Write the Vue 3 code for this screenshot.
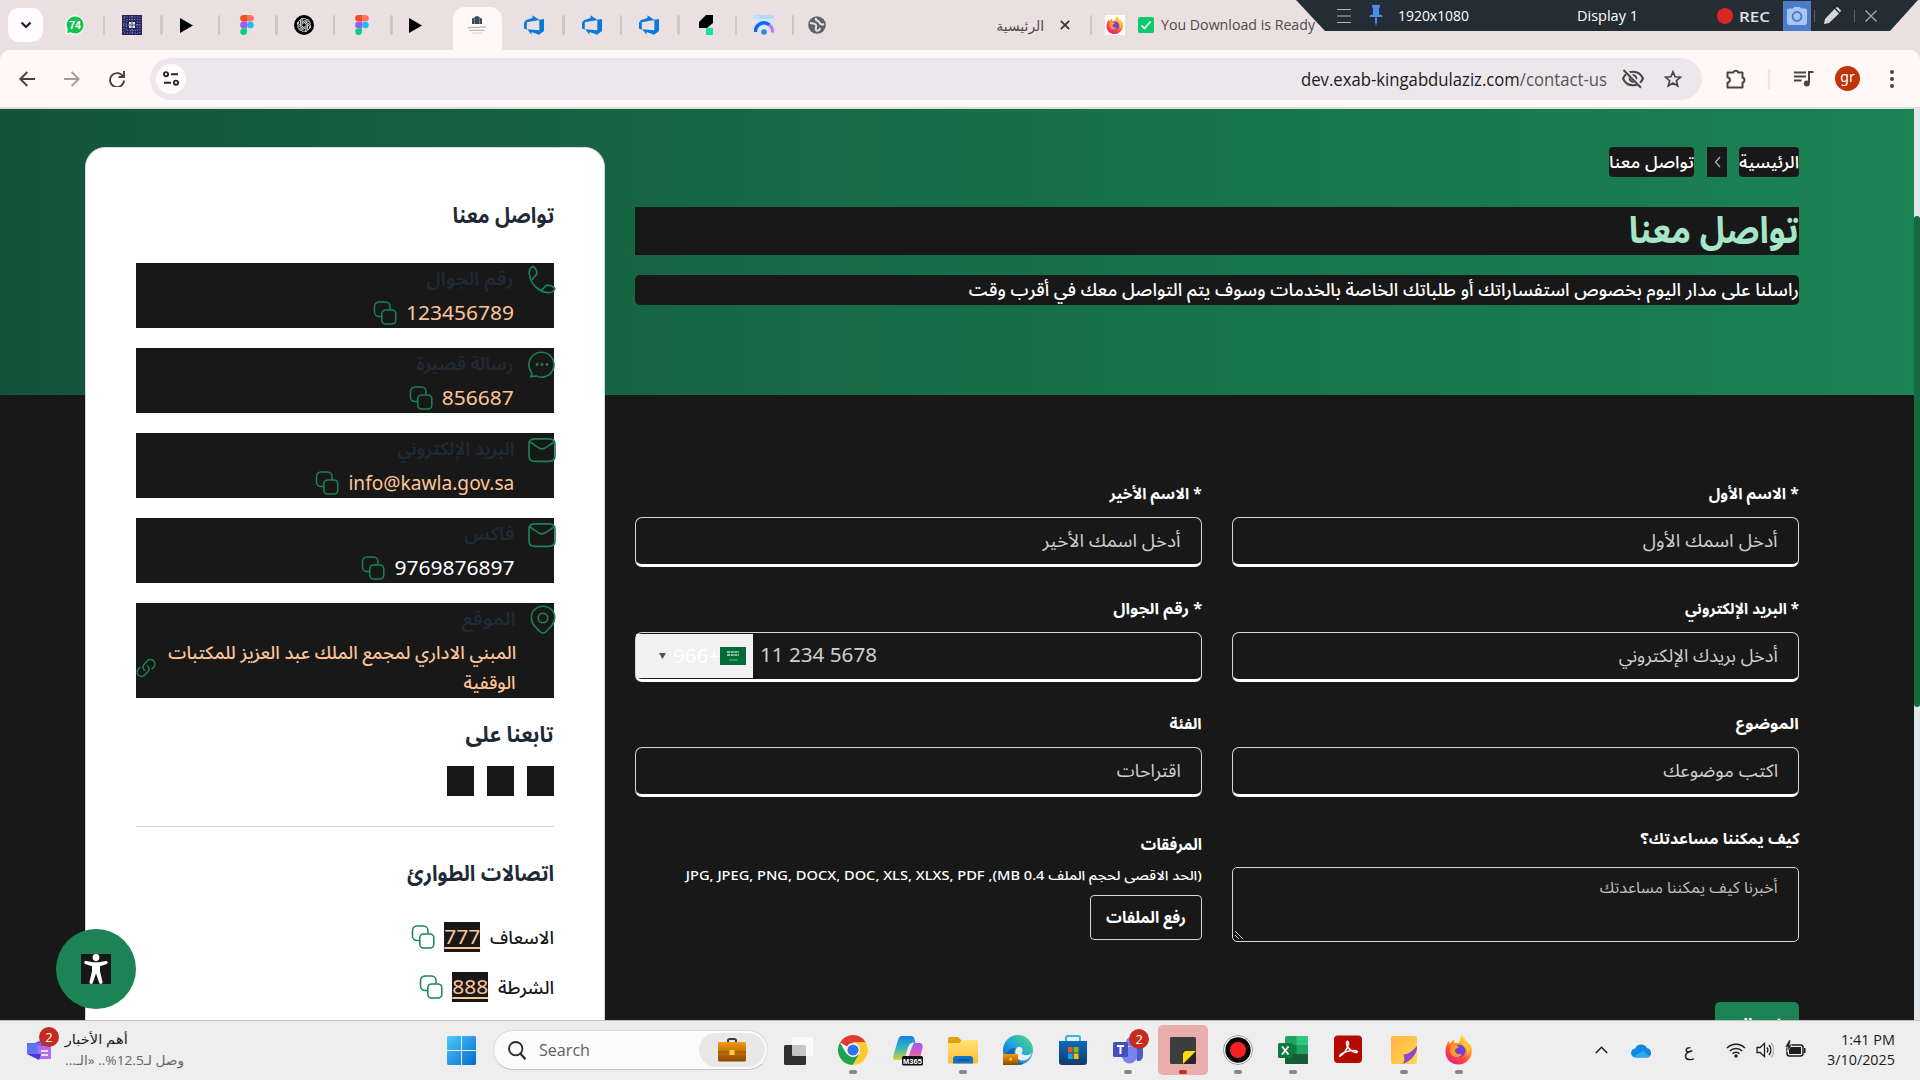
<script setup>
// Scales a text run horizontally so that it takes exactly the given width.
const vFit = {
  mounted(el, { value }) {
    const natural = el.getBoundingClientRect().width
    const rtl = getComputedStyle(el).direction === 'rtl'
    el.style.transformOrigin = rtl ? 'right center' : 'left center'
    el.style.transform = `scaleX(${value / natural})`
    el.style[rtl ? 'marginLeft' : 'marginRight'] = `${value - natural}px`
  },
}

const tabs = ['whatsapp', 'emblem', 'play', 'figma', 'openai', 'figma', 'play', 'site', 'devops', 'devops', 'devops', 'bolt', 'gauge']

const contacts = [
  { icon: 'phone', label: 'رقم الجوال', lw: 87, value: '123456789', vw: 108 },
  { icon: 'chat', label: 'رسالة قصيرة', lw: 97, value: '856687', vw: 72 },
  { icon: 'mail', label: 'البريد الإلكتروني', lw: 117, value: 'info@kawla.gov.sa', vw: 166 },
  { icon: 'mail', label: 'فاكس', lw: 50, value: '9769876897', vw: 120, plain: true },
]

const emergency = [
  { name: 'الاسعاف', w: 64, num: '777' },
  { name: 'الشرطة', w: 56, num: '888' },
]

const fields = [
  { label: '* الاسم الأول', lw: 90, ph: 'أدخل اسمك الأول', pw: 135 },
  { label: '* الاسم الأخير', lw: 92, ph: 'أدخل اسمك الأخير', pw: 138 },
  { label: '* البريد الإلكتروني', lw: 114, ph: 'أدخل بريدك الإلكتروني', pw: 159 },
  { label: '* رقم الجوال', lw: 89, phone: true },
  { label: 'الموضوع', lw: 63, ph: 'اكتب موضوعك', pw: 115 },
  { label: 'الفئة', lw: 32, ph: 'اقتراحات', pw: 64 },
]

const apps = [
  { id: 'taskview' },
  { id: 'chrome', run: true },
  { id: 'copilot' },
  { id: 'explorer', run: true },
  { id: 'edge' },
  { id: 'store' },
  { id: 'teams', run: true, badge: 2 },
  { id: 'sticky', run: true, active: true },
  { id: 'record', run: true },
  { id: 'excel', run: true },
  { id: 'acrobat' },
  { id: 'notes', run: true },
  { id: 'firefox', run: true },
]
</script>

<template>
  <div class="screen">
    <svg class="sprite" width="0" height="0" aria-hidden="true">
      <defs>
        <linearGradient id="ffBody" x1="0.8" y1="0" x2="0.2" y2="1">
          <stop offset="0" stop-color="#fff44f" /><stop offset=".35" stop-color="#ffa52a" />
          <stop offset=".65" stop-color="#ff4b3c" /><stop offset="1" stop-color="#e31587" />
        </linearGradient>
        <linearGradient id="winBlue" x1="0" y1="0" x2="1" y2="1">
          <stop offset="0" stop-color="#4ccaff" /><stop offset="1" stop-color="#0669cb" />
        </linearGradient>
        <linearGradient id="brown" x1="0" y1="0" x2="0" y2="1">
          <stop offset="0" stop-color="#f39a12" /><stop offset=".6" stop-color="#b96a05" /><stop offset="1" stop-color="#8a4704" />
        </linearGradient>
        <linearGradient id="cpA" x1="0" y1="0" x2="0" y2="1">
          <stop offset="0" stop-color="#1b7fe0" /><stop offset=".5" stop-color="#2fb8c0" /><stop offset="1" stop-color="#e8c92e" />
        </linearGradient>
        <linearGradient id="cpB" x1="0" y1="0" x2="0" y2="1">
          <stop offset="0" stop-color="#9a5cf0" /><stop offset=".5" stop-color="#d85bc0" /><stop offset="1" stop-color="#ff8f5e" />
        </linearGradient>
        <linearGradient id="edgeG" x1="0" y1="1" x2="1" y2="0">
          <stop offset="0" stop-color="#0c59a4" /><stop offset=".5" stop-color="#1fa5e0" /><stop offset="1" stop-color="#5fe06a" />
        </linearGradient>
        <linearGradient id="folder" x1="0" y1="0" x2="0" y2="1">
          <stop offset="0" stop-color="#ffe07a" /><stop offset="1" stop-color="#fbc02d" />
        </linearGradient>
        <linearGradient id="storeG" x1="0" y1="0" x2="0" y2="1">
          <stop offset="0" stop-color="#0a6ac0" /><stop offset="1" stop-color="#123a68" />
        </linearGradient>
        <linearGradient id="noteG" x1="0" y1="0" x2="1" y2="1">
          <stop offset="0" stop-color="#ffb347" /><stop offset="1" stop-color="#ffd94a" />
        </linearGradient>
        <symbol id="firefox" viewBox="0 0 32 32">
          <path fill="url(#ffBody)" d="M19 1c2 2 3 4 3.500 6 3 1 4.500 3 5.500 5 3 8-2 18-12 18.500C7 30.500 2 24 2.500 17 2.600 13 4 9 6 7l1 3c1-2 2.500-3.500 4-4.500l.5 3.500h4C17 7 17 3 19 1z" />
          <circle cx="16" cy="17" r="6.500" fill="#7540d9" />
          <path fill="#ff9a2b" d="M8 11c3-1 6 0 8 2-1 1-3 1.500-4 3 0 4 4 5 7 4-2 5-11 4-12-3z" />
          <path fill="#ffc93a" d="M22 8c4 3 5 9 2 14 1-5 0-9-4-11z" />
        </symbol>
      </defs>
    </svg>

    <!-- Browser tab strip -->
    <header class="tabstrip">
      <button class="tab-search">
        <svg width="12" height="8" viewBox="0 0 12 8"><path d="M1.500 1.500 6 6l4.500-4.500" fill="none" stroke="#1f1a1b" stroke-width="2.200" /></svg>
      </button>
      <div class="tabs">
        <div v-for="(t, i) in tabs" :key="i" class="tab" :class="{ active: t === 'site', nosep: i === 6 }">
          <svg v-if="t === 'whatsapp'" width="20" height="20" viewBox="0 0 20 20">
            <path d="M10 .3a9.700 9.700 0 1 1-4.600 18.300L.4 19.600l1.200-4.700A9.700 9.700 0 0 1 10 .3z" fill="#fff" />
            <path d="M10 1.500a8.500 8.500 0 1 1-4.300 15.800l-3.700.8.900-3.600A8.500 8.500 0 0 1 10 1.500z" fill="#17c24c" />
            <text x="10" y="13.800" text-anchor="middle" font-size="10.500" font-weight="700" fill="#fff" font-family="Liberation Sans">74</text>
          </svg>
          <svg v-else-if="t === 'emblem'" width="20" height="20" viewBox="0 0 20 20">
            <rect width="20" height="20" fill="#25245c" />
            <g fill="none" stroke="#a3a2cf" stroke-width="1" stroke-dasharray="1 1.600">
              <rect x="2" y="2" width="16" height="16" /><rect x="4.500" y="4.500" width="11" height="11" /><path d="M10 1v18M1 10h18" />
            </g>
            <path d="M7 7h2.500v2.500H7zM10.500 7H13v2.500h-2.500zM7 10.500h2.500V13H7zM10.500 10.500H13V13h-2.500z" fill="#e6e6f7" />
          </svg>
          <svg v-else-if="t === 'play'" class="play" width="14" height="15" viewBox="0 0 14 15"><path d="M0 0 13 7.500 0 15z" fill="#000" /></svg>
          <svg v-else-if="t === 'figma'" width="14" height="20" viewBox="0 0 14 20">
            <path d="M3.500 0H7v6.600H3.500a3.300 3.300 0 0 1 0-6.600z" fill="#f24e1e" />
            <path d="M7 0h3.500a3.300 3.300 0 0 1 0 6.600H7z" fill="#ff7262" />
            <path d="M3.500 6.600H7v6.700H3.500a3.300 3.300 0 0 1 0-6.700z" fill="#a259ff" />
            <circle cx="10.400" cy="10" r="3.300" fill="#1abcfe" />
            <path d="M3.500 13.300H7v3.300a3.400 3.400 0 1 1-3.500-3.300z" fill="#0acf83" />
          </svg>
          <svg v-else-if="t === 'openai'" width="20" height="20" viewBox="0 0 20 20">
            <circle cx="10" cy="10" r="10" fill="#000" />
            <g fill="none" stroke="#fff" stroke-width=".8">
              <path v-for="a in 6" :key="a" d="M8 10.500V6a2.500 2.500 0 0 1 4.600-1.300M8.100 7.200 12 5a2.600 2.600 0 0 1 3.600 1" :transform="`rotate(${a * 60} 10 10)`" />
            </g>
          </svg>
          <svg v-else-if="t === 'site'" width="20" height="20" viewBox="0 0 20 20">
            <path d="M5 9V3.500L7 3v6zM7.300 9V2L10 1l2.700 1v7zM13 9V3l2 .5V9z" fill="#2f4c5c" />
            <path d="M1 13c1-2 2 1 3-.5s2 1 3 0 2 .8 3 0 2 .8 3-.3 2 .8 3 0 2-.5 3 .5M2 15.300h16" stroke="#b5aca6" stroke-width="1.100" fill="none" />
            <path d="M5 18h10" stroke="#d0c9c5" stroke-width=".8" />
          </svg>
          <svg v-else-if="t === 'devops'" width="20" height="20" viewBox="0 0 20 20">
            <path d="M20 4v12l-5 3.800-7.500-2.900v2.900l-4.200-5.500 12 1V4.800zM15.500 4.900 8.500.3v2.800L2.200 5 0 7.500v6l2.800 1.200V7.300z" fill="#0a7ad8" />
          </svg>
          <svg v-else-if="t === 'bolt'" width="16" height="20" viewBox="0 0 16 20">
            <path d="M8 0h7v8l-6 5H1V7z" fill="#000" /><rect x="8" y="13" width="7" height="7" fill="#16e0a4" />
          </svg>
          <svg v-else width="20" height="20" viewBox="0 0 20 20">
            <rect width="20" height="13" rx="1" fill="#b5d9fa" /><rect y="4" width="20" height="10" fill="#d3e8fb" /><circle cx="2" cy="2" r=".7" fill="#fff" /><circle cx="4.500" cy="2" r=".7" fill="#fff" />
            <path d="M1.500 17a8.500 8.500 0 0 1 14-7" fill="none" stroke="#1565f5" stroke-width="3.400" />
            <path d="M15.500 10a8.500 8.500 0 0 1 3 7.500" fill="none" stroke="#c678f2" stroke-width="3.400" />
            <circle cx="10" cy="17" r="2.800" fill="#1c8ef0" />
          </svg>
        </div>
        <div class="tab wide">
          <svg class="globe" width="18" height="18" viewBox="0 0 18 18">
            <circle cx="9" cy="9" r="8.800" fill="#5f6368" />
            <path d="M2 7c3 1 5 0 6 2s-1 3 0 5 4 0 4-2M8 2c-1 3 2 2 3 4s3 3 5 2" fill="none" stroke="#eae0e1" stroke-width="2" />
          </svg>
          <div class="push" dir="rtl"><span class="tabtitle" v-fit="48">الرئيسية</span></div>
          <svg class="close" width="10" height="10" viewBox="0 0 10 10"><path d="m.8.8 8.400 8.400M9.200.8.800 9.200" stroke="#3f3536" stroke-width="1.800" /></svg>
        </div>
        <div class="tab last">
          <span class="ffbox"><svg width="20" height="20"><use href="#firefox" /></svg></span>
          <svg class="ok" width="16" height="16" viewBox="0 0 16 16"><rect width="16" height="16" rx="2" fill="#0ccb6a" /><path d="m3.500 8.500 3 3 6-7" fill="none" stroke="#fff" stroke-width="1.600" /></svg>
          <span class="tabtitle" v-fit="154">You Download is Ready</span>
        </div>
      </div>
      <div class="recorder">
        <svg class="burger" width="14" height="16" viewBox="0 0 14 16"><path d="M0 1.500h14M0 8h14M0 14.500h14" stroke="#b6babd" stroke-width="1.200" /></svg>
        <svg class="pin" width="14" height="21" viewBox="0 0 14 21"><path d="M3 0h8v2l-1 1v6l3.500 1.500V12H.5v-1.500L4 9V3L3 2zM6 12.500h2V17l-1 4-1-4z" fill="#4e8bea" /></svg>
        <span class="rtext res" v-fit="71">1920x1080</span>
        <span class="rtext disp" v-fit="61">Display 1</span>
        <i class="dot"></i>
        <span class="rtext rec" v-fit="31">REC</span>
        <span class="cam">
          <svg width="20" height="18" viewBox="0 0 20 18"><path d="M6 1.500 7 0h6l1 1.500h4a2 2 0 0 1 2 2V16a2 2 0 0 1-2 2H2a2 2 0 0 1-2-2V3.500a2 2 0 0 1 2-2z" fill="#a9c6f3" /><circle cx="10" cy="9.500" r="4.400" fill="none" stroke="#4b7cc8" stroke-width="2" /></svg>
        </span>
        <i class="vsep"></i>
        <svg class="pencil" width="17" height="17" viewBox="0 0 17 17"><path d="m11.500 1 2-1 3.500 3.500-1 2zM10.500 2l4.500 4.500L5 16l-5 1 1-5z" fill="#d4d7d9" /></svg>
        <i class="vsep"></i>
        <svg class="rx" width="12" height="12" viewBox="0 0 12 12"><path d="m.5.5 11 11M11.500.5l-11 11" stroke="#a6abb0" stroke-width="1.300" /></svg>
      </div>
    </header>

    <!-- Browser toolbar -->
    <div class="toolbar">
      <svg class="back" width="16" height="16" viewBox="0 0 16 16"><path d="M16 8H1.500M8.300 1 1.300 8l7 7" fill="none" stroke="#4a3f3f" stroke-width="1.900" /></svg>
      <svg class="fwd" width="16" height="16" viewBox="0 0 16 16"><path d="M0 8h14.500M7.700 1l7 7-7 7" fill="none" stroke="#a79d9c" stroke-width="1.900" /></svg>
      <svg class="reload" width="16" height="16" viewBox="0 0 16 16"><path d="M14 5.500A7 7 0 1 0 15 9.500M15 0v6H9.500" fill="none" stroke="#4a3f3f" stroke-width="1.900" /></svg>
      <div class="omnibox">
        <span class="tune"><svg width="16" height="15" viewBox="0 0 16 15"><g fill="none" stroke="#2b2324" stroke-width="1.900"><circle cx="3" cy="3.200" r="2.100" /><path d="M8 3.200h7M1 11.700h7" /><circle cx="13" cy="11.700" r="2.100" /></g></svg></span>
        <span class="url" v-fit="306">dev.exab-kingabdulaziz.com<em>/contact-us</em></span>
        <svg class="eye" width="24" height="20" viewBox="0 0 24 20"><g fill="none" stroke="#4b4343" stroke-width="2"><path d="M2 9.500C4 5 8 2.700 12 2.700S20 5 22 9.500c-2 4.500-6 6.800-10 6.800S4 14 2 9.500z" /><circle cx="12" cy="9.500" r="3.300" /><path d="M3.500.8 21 18.600" stroke="#ece7ea" stroke-width="4" /><path d="M2.500 1 20 18.800" /></g></svg>
        <svg class="star" width="18" height="18" viewBox="0 0 18 18"><path d="m9 1.800 2.100 5 5.400.4-4.100 3.500 1.300 5.300L9 13.100 4.300 16l1.300-5.300L1.500 7.200l5.400-.4z" fill="none" stroke="#4b4343" stroke-width="1.700" /></svg>
      </div>
      <svg class="ext" width="22" height="22" viewBox="0 0 22 22"><path d="M2.500 4.500h6a2.300 1.800 0 1 1 4.600 0h4.400v5.200a1.900 2.400 0 0 1 0 4.800v5h-15v-4.800c3.200-.5 3.200-4.800 0-5.400z" fill="none" stroke="#4b4343" stroke-width="2" stroke-linejoin="round" /></svg>
      <i class="tsep"></i>
      <svg class="music" width="20" height="16" viewBox="0 0 20 16"><path d="M0 1.500h12M0 5.500h12M0 9.500h7.500" stroke="#4b4343" stroke-width="2" /><path d="M15 12V1h4.500" stroke="#4b4343" stroke-width="2" fill="none" /><circle cx="12.800" cy="12.500" r="3" fill="#4b4343" /></svg>
      <span class="avatar">gr</span>
      <svg class="dots" width="4" height="18" viewBox="0 0 4 18"><g fill="#4b4343"><circle cx="2" cy="2" r="2" /><circle cx="2" cy="9" r="2" /><circle cx="2" cy="16" r="2" /></g></svg>
    </div>

    <!-- Website -->
    <div class="browser-view">
      <div class="page" dir="rtl">
        <main class="main">
          <nav class="crumbs">
            <span class="crumb"><span v-fit="60">الرئيسية</span></span>
            <span class="crumb sep"><svg width="7" height="12" viewBox="0 0 7 12"><path d="M6 1 1.500 6 6 11" fill="none" stroke="#a9adb3" stroke-width="1.300" /></svg></span>
            <span class="crumb"><span v-fit="85">تواصل معنا</span></span>
          </nav>
          <h1><span v-fit="170">تواصل معنا</span></h1>
          <p class="lead"><span v-fit="830">راسلنا على مدار اليوم بخصوص استفساراتك أو طلباتك الخاصة بالخدمات وسوف يتم التواصل معك في أقرب وقت</span></p>

          <form class="form">
            <div v-for="f in fields" :key="f.label" class="field">
              <label><span v-fit="f.lw">{{ f.label }}</span></label>
              <div v-if="f.phone" class="input phone" dir="ltr">
                <div class="dial">
                  <svg width="7" height="6" viewBox="0 0 7 6"><path d="M0 0h7L3.500 6z" fill="#555" /></svg>
                  <span class="code" v-fit="47">966+</span>
                  <svg class="flag" width="26" height="18" viewBox="0 0 26 18"><rect width="26" height="18" fill="#036b37" /><path d="M7 5h12M7 8h12" stroke="#8fc0a6" stroke-width="2" stroke-dasharray="3 .7" /><path d="M9 13h9" stroke="#6fae8d" stroke-width="1" /></svg>
                </div>
                <span class="ph" v-fit="117">11 234 5678</span>
              </div>
              <div v-else class="input"><span class="ph" v-fit="f.pw">{{ f.ph }}</span></div>
            </div>
            <div class="field">
              <label><span v-fit="159">كيف يمكننا مساعدتك؟</span></label>
              <div class="area">
                <span class="ph small" v-fit="178">أخبرنا كيف يمكننا مساعدتك</span>
                <svg class="grip" width="8" height="8" viewBox="0 0 8 8"><path d="M0 0l8 8M0 4l4 4" stroke="#c9c9c9" stroke-width="1" /></svg>
              </div>
            </div>
            <div class="field files">
              <label><span v-fit="61">المرفقات</span></label>
              <div class="hint"><span v-fit="516">(الحد الاقصى لحجم الملف 0.4 MB), JPG, JPEG, PNG, DOCX, DOC, XLS, XLXS, PDF</span></div>
              <div class="upload"><span v-fit="80">رفع الملفات</span></div>
            </div>
          </form>
          <div class="submit"><span v-fit="46">إرسال</span></div>
        </main>

        <aside class="card">
          <h2><span v-fit="102">تواصل معنا</span></h2>
          <div class="list">
            <div v-for="c in contacts" :key="c.label" class="contact">
              <svg v-if="c.icon === 'phone'" class="ci" width="28" height="30" viewBox="0 0 28 30"><path d="M5 1.500C2 2.500 1 6 1.300 9c1 9.500 9 18 18.700 18.600 3 .2 6-1.200 6.800-4-2-3-5-3.300-7.500-3.500-2.500.4-3.300 3.600-5.300 4.500M5 1.500c3 2 4 4.500 4 7-1 2.500-3.500 3-4.300 5.800" fill="none" stroke="currentColor" stroke-width="1.600" stroke-linecap="round" stroke-linejoin="round" /></svg>
              <svg v-else-if="c.icon === 'chat'" class="ci" width="28" height="30" viewBox="0 0 28 30"><path d="M14 2.200A12.500 12.500 0 1 1 8 25.900c-1.500.5-3 1.200-5.500.8 1.300-1 1.800-3 .6-5A12.500 12.500 0 0 1 14 2.200z" fill="none" stroke="currentColor" stroke-width="1.600" stroke-linejoin="round" /><g fill="currentColor"><circle cx="9" cy="14.500" r="1.400" /><circle cx="14" cy="14.500" r="1.400" /><circle cx="19" cy="14.500" r="1.400" /></g></svg>
              <svg v-else class="ci" width="28" height="30" viewBox="0 0 28 30"><path d="M7 3.800h14c4 0 6 1.500 6 5.500v11.500c0 4-2 5.500-6 5.500H7c-4 0-6-1.500-6-5.500V9.300C1 5.300 3 3.800 7 3.800zM2 7.300c4 1.500 8 6.500 12 6.500s8-5 12-6.500" fill="none" stroke="currentColor" stroke-width="1.700" /></svg>
              <div class="info">
                <div class="cl"><span v-fit="c.lw">{{ c.label }}</span></div>
                <div class="cv" :class="{ plain: c.plain }">
                  <span v-fit="c.vw">{{ c.value }}</span>
                  <svg class="copy" width="24" height="24" viewBox="0 0 24 24"><path d="M9 15.500H6A4.500 4.500 0 0 1 1.500 11V5.500A4.500 4.500 0 0 1 6 1h6.500A4.500 4.500 0 0 1 17 5.500V8.500" /><rect x="8.800" y="9" width="14" height="14" rx="3.800" /></svg>
                </div>
              </div>
            </div>
            <div class="contact place">
              <svg class="ci" width="26" height="30" viewBox="0 0 26 30"><path d="M13 1.200c6.800 0 11.700 5 11.700 11.300 0 6.500-5 10.500-9.200 14.500-1.800 1.600-3.200 1.600-5 0C6.300 23 1.300 19 1.300 12.500 1.300 6.200 6.200 1.200 13 1.200z" fill="none" stroke="currentColor" stroke-width="1.600" /><circle cx="13" cy="13" r="4.800" fill="none" stroke="currentColor" stroke-width="1.600" /></svg>
              <div class="info">
                <div class="cl"><span v-fit="54">الموقع</span></div>
                <div class="addr"><span v-fit="348">المبني الاداري لمجمع الملك عبد العزيز للمكتبات</span><br /><span v-fit="52">الوقفية</span></div>
              </div>
              <svg class="link" width="20" height="20" viewBox="0 0 20 20"><g fill="none" stroke="currentColor" stroke-width="1.500" stroke-linecap="round"><path d="M8.500 12.200c-2.300-2-1.800-4.300-.3-6l2.800-3c1.800-2 4.800-2.200 6.600-.4s1.600 4.500 0 6.300l-1.500 1.600" /><path d="M11.500 7.800c2.300 2 1.800 4.300.3 6l-2.800 3c-1.800 2-4.800 2.200-6.600.4s-1.600-4.500 0-6.300l1.500-1.600" /></g></svg>
            </div>
          </div>
          <h2 class="follow"><span v-fit="88">تابعنا على</span></h2>
          <div class="social"><i></i><i></i><i></i></div>
          <hr />
          <h2 class="emerg"><span v-fit="147">اتصالات الطوارئ</span></h2>
          <div v-for="e in emergency" :key="e.num" class="erow">
            <span class="en"><span v-fit="e.w">{{ e.name }}</span></span>
            <span class="num"><span v-fit="36">{{ e.num }}</span></span>
            <svg class="copy" width="24" height="24" viewBox="0 0 24 24"><path d="M9 15.500H6A4.500 4.500 0 0 1 1.500 11V5.500A4.500 4.500 0 0 1 6 1h6.500A4.500 4.500 0 0 1 17 5.500V8.500" /><rect x="8.800" y="9" width="14" height="14" rx="3.800" /></svg>
          </div>
        </aside>
      </div>
      <div class="scroll"><i></i></div>
      <div class="a11y">
        <span><svg width="26" height="30" viewBox="0 0 26 30"><circle cx="13" cy="3.500" r="3.400" fill="#fff" /><path d="M1.500 7.500C1 8.500 1.300 9.700 2.300 10.100L9 12.300v5L6.500 28c-.3 2 2.500 2.800 3.300.8L13 19.500l3.200 9.300c.8 2 3.600 1.200 3.300-.8L17 17.300v-5l6.700-2.200c1.800-.8 1-3.500-1-3.100L16 8.300h-6L3.300 7c-.8-.1-1.500 0-1.800.5z" fill="#fff" /></svg></span>
      </div>
    </div>

    <!-- Taskbar -->
    <footer class="taskbar">
      <div class="widget">
        <svg width="28" height="28" viewBox="0 0 28 28"><path d="m2 12 12-6 12 6-10 12z" fill="#7b3ff0" /><path d="M2 8h14v13l-14-2z" fill="#5b74f0" /><path d="M12 11h14v13H14z" fill="#b06cf5" /><path d="M2 19l12 6 2-6z" fill="#4a35d8" /><path d="M16 16h7M16 20h7" stroke="#fff" stroke-width="1.500" /></svg>
        <b class="badge">2</b>
      </div>
      <div class="news" dir="rtl">
        <div class="n1"><span v-fit="63">أهم الأخبار</span></div>
        <div class="n2"><span v-fit="119">وصل لـ12.5%.. «الـ...</span></div>
      </div>
      <svg class="win" width="29" height="29" viewBox="0 0 29 29"><path fill="url(#winBlue)" d="M1 0h13v14H0V1zM15 0h13l1 1v13H15zM0 15h14v14H1l-1-1zM15 15h14v13l-1 1H15z" /></svg>
      <div class="search">
        <svg width="18" height="19" viewBox="0 0 18 19"><circle cx="7.700" cy="7.700" r="6.700" fill="none" stroke="#2c2c2c" stroke-width="1.800" /><path d="m12.500 12.700 5 5.500" stroke="#2c2c2c" stroke-width="2.200" /></svg>
        <span class="stext" v-fit="51">Search</span>
        <span class="case"><svg width="30" height="24" viewBox="0 0 30 24"><path d="M11 5V2.500C11 1.500 12 1 13 1h4c1 0 2 .5 2 1.500V5" fill="none" stroke="#3c3c3c" stroke-width="2" /><rect x="1" y="4" width="28" height="19.500" rx="1.500" fill="url(#brown)" /><path d="M1 14h28" stroke="#8f4f02" /><rect x="12.500" y="12" width="5" height="5" fill="#ffd83a" /></svg></span>
      </div>
      <div class="apps">
        <div v-for="a in apps" :key="a.id" class="app" :class="{ on: a.active }">
          <svg width="32" height="32" viewBox="0 0 32 32">
            <template v-if="a.id === 'taskview'"><rect x="2" y="11" width="22" height="20" rx="1.500" fill="#303030" /><rect x="10" y="3" width="21" height="19" rx="1" fill="#fff" opacity=".72" /></template>
            <template v-else-if="a.id === 'chrome'">
              <circle cx="16" cy="16" r="15" fill="#fff" />
              <path d="M16 16 3 8.500A15 15 0 0 1 29 8.500H16z" fill="#e23b2f" /><path d="M3 8.500A15 15 0 0 0 16 31l6.500-11.200L9.500 19.800z" fill="#20a050" /><path d="M29 8.500A15 15 0 0 1 16 31l6.500-11.200L16 8.500z" fill="#fccc2e" />
              <circle cx="16" cy="16" r="7" fill="#fff" /><circle cx="16" cy="16" r="5.600" fill="#2f73e8" />
            </template>
            <template v-else-if="a.id === 'copilot'">
              <path d="M10 2h9c2 0 3 1 3.500 3l1 4c-5-1-7 2-8 6l-2 7c-1 3-3 4-5 4H4c-3 0-3-2-2.500-5L6 6c.7-2.500 2-4 4-4z" fill="url(#cpA)" /><path d="M22 9h5c3 0 4 2 3.500 5L28 24c-1 3-3 4-5 4h-9c3-2 4-13 8-19z" fill="url(#cpB)" />
              <rect x="10" y="22" width="21" height="9.500" rx="1.500" fill="#111" /><text x="20.500" y="29.600" font-size="7.500" font-weight="700" fill="#fff" text-anchor="middle" font-family="Liberation Sans">M365</text>
            </template>
            <template v-else-if="a.id === 'explorer'"><path d="M1 5a2 2 0 0 1 2-2h8l3 3v6H1z" fill="#e0a100" /><path d="M1 9h11l3-3h15a1 1 0 0 1 1 1v21a1.500 1.500 0 0 1-1.500 1.500h-27A1.500 1.500 0 0 1 1 28z" fill="url(#folder)" /><path d="M6 29.500V25a3 3 0 0 1 3-3h14a3 3 0 0 1 3 3v4.500z" fill="#1173c6" /><path d="M10 26h12" stroke="#0a4f91" stroke-width="1.300" /></template>
            <template v-else-if="a.id === 'edge'">
              <circle cx="16" cy="16" r="15" fill="url(#edgeG)" /><path d="M14 15c1.500-3.500 7-2.500 6.500 1.500-.3 2-1.500 2.500 0 3.700 3 2 7 1 9.500-1.200-1.500 4.500-5.500 8-10.500 7.500-5-.7-7.500-6-5.500-11.500z" fill="#eee" /><path d="M13 14c-3 6 0 15 9 15.500-2 1-4.500 1.500-7 1.500-6 0-11-4-11-9 0-4 4-8 9-8z" fill="#1260b4" />
              <rect x="1" y="20" width="15" height="11" fill="url(#brown)" /><rect x="7.500" y="24" width="2.500" height="2.500" fill="#ffd83a" />
            </template>
            <template v-else-if="a.id === 'store'"><path d="M9 8V4a2 2 0 0 1 2-2h10a2 2 0 0 1 2 2v4" fill="none" stroke="#30b5f5" stroke-width="2" /><path d="M2 7h28v21a3 3 0 0 1-3 3H5a3 3 0 0 1-3-3z" fill="url(#storeG)" /><path d="M11 13h4.700v5.500H11z" fill="#f35325" /><path d="M16.700 13h4.800v5.500h-4.800z" fill="#81bc06" /><path d="M11 19.500h4.700V25H11z" fill="#05a6f0" /><path d="M16.700 19.500h4.800V25h-4.800z" fill="#ffba08" /></template>
            <template v-else-if="a.id === 'teams'"><circle cx="19" cy="8" r="5" fill="#7b83eb" /><circle cx="27" cy="10" r="3.300" fill="#5059c9" /><path d="M22 13h9v9a5 5 0 0 1-6 5z" fill="#5059c9" /><path d="M10 13h15v9a7.500 7.500 0 0 1-15 0z" fill="#7b83eb" /><rect x="1" y="8" width="15" height="15" rx="1.500" fill="#4550bd" /><path d="M5 12h7M8.500 12v8" stroke="#fff" stroke-width="2" /></template>
            <template v-else-if="a.id === 'sticky'"><path d="M3 4.500A1.500 1.500 0 0 1 4.500 3h23A1.500 1.500 0 0 1 29 4.500V17L16 30H4.500A1.500 1.500 0 0 1 3 28.500z" fill="#3d3d3d" /><path d="M16 17v13h12a1 1 0 0 0 1-1V17z" fill="#262626" /><path d="M16 30V20.500A3.500 3.500 0 0 1 19.500 17H29z" fill="#fddc0b" /></template>
            <template v-else-if="a.id === 'record'"><circle cx="16" cy="16" r="14.500" fill="#fff" stroke="#777" stroke-width=".7" /><circle cx="16" cy="16" r="12.700" fill="#050505" /><circle cx="16" cy="16" r="8" fill="#f9211f" /></template>
            <template v-else-if="a.id === 'excel'"><rect x="8" y="2" width="23" height="28" rx="1.500" fill="#21a366" /><path d="M19.500 2H30a1 1 0 0 1 1 1v8H19.500z" fill="#33c481" /><path d="M8 11h11.500v9H8z" fill="#107c41" /><path d="M8 20h23v9a1 1 0 0 1-1 1H9a1 1 0 0 1-1-1z" fill="#185c37" /><rect x="1" y="9" width="14.500" height="15" rx="1.500" fill="#0f7a40" /><path d="m5 12.500 6.500 8M11.500 12.500l-6.500 8" stroke="#fff" stroke-width="1.900" /></template>
            <template v-else-if="a.id === 'acrobat'"><rect x="2" y="1.500" width="28" height="27.500" rx="4" fill="#b30b00" /><path d="M8 22c3-1 7-6 8.500-12 .5-3-2-3.500-2-1 0 5 6 9 9 9.500 2.500.3 2.500-2-1-2-5 0-10 1.500-13 3.500-2 1.500-2 3-1.500 2z" fill="none" stroke="#fff" stroke-width="1.600" /></template>
            <template v-else-if="a.id === 'notes'"><path d="M3 4a2 2 0 0 1 2-2h22a2 2 0 0 1 2 2v24a2 2 0 0 1-2 2H5a2 2 0 0 1-2-2z" fill="url(#noteG)" /><path d="M29 12v3C27 22 23 27 14.500 30c2-2 2.500-5 1-9.500 5-.5 9-3.500 13.500-8.500z" fill="#8b4bc9" /><path d="M15.500 20.500C17 25 16 28 13 30l3.500-4z" fill="#a96be0" /></template>
            <use v-else href="#firefox" />
          </svg>
          <b v-if="a.badge" class="badge">{{ a.badge }}</b>
          <i v-if="a.run" class="run"></i>
        </div>
      </div>
      <div class="tray">
        <svg class="chev" width="13" height="8" viewBox="0 0 13 8"><path d="m.8 7 5.700-5.700L12.200 7" fill="none" stroke="#222" stroke-width="1.600" /></svg>
        <svg class="cloud" width="21" height="15" viewBox="0 0 21 15"><path d="M5 14.500a4.500 4.500 0 0 1-.8-9A6.500 6.500 0 0 1 16 5a5 5 0 0 1 1 9.500z" fill="#1287e0" /><path d="M3 13.500 12 8l7 5.500a4 4 0 0 1-2.500 1H5.500z" fill="#2ca7f0" /></svg>
        <span class="lang" dir="rtl">ع</span>
        <svg class="wifi" width="20" height="16" viewBox="0 0 20 16"><g fill="none" stroke="#1d1d1d" stroke-width="1.500"><path d="M1 6a12.700 12.700 0 0 1 18 0M3.800 9a8.800 8.800 0 0 1 12.400 0M6.500 11.800a5 5 0 0 1 7 0" /></g><circle cx="10" cy="14" r="1.700" fill="#1d1d1d" /></svg>
        <svg class="vol" width="18" height="16" viewBox="0 0 18 16"><g fill="none" stroke="#1d1d1d" stroke-width="1.300"><path d="M1 5.500h3L8.500 1.500v13L4 10.500H1z" /><path d="M11 5.500a4 4 0 0 1 0 5M13 3a7.500 7.500 0 0 1 0 10" /><path d="M15.200 1a10.500 10.500 0 0 1 0 14" stroke="#aaa" /></g></svg>
        <svg class="bat" width="21" height="17" viewBox="0 0 21 17"><rect x="2" y="5" width="16" height="11" rx="2.500" fill="none" stroke="#1d1d1d" stroke-width="1.500" /><rect x="4" y="7" width="12" height="7" fill="#1d1d1d" /><path d="M19 8h1.500v5H19z" fill="#1d1d1d" /><path d="M4 0 0 7h3l-1 5 5-7H4.500L6 0z" fill="#1d1d1d" stroke="#eee" stroke-width=".6" /></svg>
        <div class="clock"><span v-fit="54">1:41 PM</span><br /><span v-fit="68">3/10/2025</span></div>
      </div>
    </footer>
  </div>
</template>

<style>
html, body { margin: 0; overflow: hidden; }
</style>

<style scoped>
.screen { width: 1920px; height: 1080px; display: flex; flex-direction: column; overflow: hidden; background: #181818; font-family: "Noto Sans", "Noto Sans Arabic", "DejaVu Sans", sans-serif; }
.screen span { white-space: nowrap; }
.sprite { position: absolute; }
svg { display: block; flex: none; }
i, b { display: block; flex: none; font-style: normal; }
span { display: inline-block; flex: none; }

.tabstrip { height: 50px; flex: none; background: #eae0e1; display: flex; position: relative; font-family: "Open Sans", "Noto Sans", "DejaVu Sans", sans-serif; }
.tab-search { width: 35px; height: 34px; margin: 8px 3px 0 8px; flex: none; border: 0; border-radius: 11px; background: #fffbff; display: flex; align-items: center; justify-content: center; padding: 0; }
.tabs { display: flex; height: 50px; }
.tab { width: 57.430px; height: 50px; display: flex; align-items: center; justify-content: center; position: relative; flex: none; box-sizing: border-box; }
.tab .play { margin-right: 6px; }
.tab::after { content: ""; position: absolute; right: -2px; top: 15px; width: 2.500px; height: 20px; border-radius: 2px; background: #d0c4c5; }
.tab.nosep::after, .tab.active::after, .tab.last::after { display: none; }
.tab.active::before { content: ""; position: absolute; left: 5px; right: 3px; top: 7px; bottom: 0; background: #fff8f6; border-radius: 12px 12px 0 0; }
.tab svg { position: relative; }
.tab.wide { width: 298px; justify-content: flex-start; padding-left: 16px; }
.push { margin-left: auto; }
.wide .close { margin: 0 20px 0 16px; }
.tab.last { width: 220px; justify-content: flex-start; padding-left: 15px; }
.ffbox { background: #fff; width: 20px; height: 20px; margin-right: 13px; }
.ok { margin-right: 7px; }
.tabtitle { font-size: 14px; color: #53484a; line-height: 20px; }
.recorder { position: absolute; left: 1296px; top: 0; width: 622px; height: 31px; background: #252d34; clip-path: polygon(0 0, 100% 0, 594px 100%, 29px 100%); display: flex; align-items: center; font-family: "Open Sans", sans-serif; }
.burger { margin-left: 41px; }
.pin { margin-left: 18px; margin-right: 15px; }
.rtext { color: #fff; font-size: 14px; line-height: 20px; }
.disp { margin-left: 108px; }
.dot { width: 16px; height: 16px; border-radius: 50%; background: #dc2626; margin-left: 79px; }
.rec { margin-left: 6px; font-size: 15px; color: #dfe2e4; font-weight: 600; }
.cam { width: 28px; height: 30px; background: #4b7cc8; margin-left: 13px; display: flex; align-items: center; justify-content: center; }
.vsep { width: 1px; height: 12px; background: #5a6268; margin-left: 3px; }
.pencil { margin: 0 10px 0 9px; }
.rx { margin-left: 10px; }

.toolbar { height: 57px; flex: none; background: #fff8f6; border-bottom: 2px solid #dfdedb; border-radius: 10px 10px 0 0; box-shadow: 0 -10px 0 0 #eae0e1; display: flex; align-items: center; box-sizing: content-box; position: relative; }
.tabstrip { z-index: 1; }
.back { margin-left: 19px; }
.fwd { margin-left: 29px; }
.reload { margin-left: 29px; }
.omnibox { width: 1552px; height: 42px; margin-left: 25px; border-radius: 21px; background: #ece7ea; display: flex; align-items: center; }
.tune { width: 30px; height: 30px; border-radius: 50%; background: #fffbfa; margin-left: 6px; margin-right: auto; display: flex; align-items: center; justify-content: center; }
.url { font-size: 18px; color: #1f1a1b; font-family: "Open Sans", sans-serif; line-height: 24px; }
.url em { font-style: normal; color: #5d5355; }
.eye { margin-left: 14px; }
.star { margin-left: 19px; margin-right: 20px; }
.ext { margin-left: 23px; }
.tsep { width: 2px; height: 20px; background: #fbdedf; margin-left: 21px; }
.music { margin-left: 24px; }
.avatar { width: 25px; height: 25px; border-radius: 50%; background: #c0340b; color: #fff; font-size: 14px; line-height: 22px; text-align: center; margin-left: 21px; }
.dots { margin-left: 30px; }

.browser-view { height: 911px; flex: none; display: flex; position: relative; overflow: hidden; }
.page { width: 1914px; height: 911px; overflow: hidden; box-sizing: border-box; padding: 38px 115px 0 0; display: flex; gap: 30px; background: linear-gradient(to right, #14533a, #166a45 42%, #1b8354) 0 0 / 100% 286px no-repeat #181818; }
.scroll { width: 6px; height: 911px; background: #e1e8eb; }
.scroll i { height: 491px; margin-top: 107px; border-radius: 3px; background: #166a40; }

.main { width: 1164px; flex: none; color: #fff; }
.crumbs { display: flex; height: 30px; font-size: 17px; line-height: 30px; font-weight: 500; }
.crumb { background: #181818; border-radius: 4px; }
.crumb.sep { border-radius: 0; width: 20px; margin: 0 12px 0 13px; display: flex; align-items: center; justify-content: center; }
h1 { margin: 30px 0 0; height: 48px; background: #181818; font-size: 37px; line-height: 44px; font-weight: 700; color: #a5e6c8; }
.lead { margin: 20px 0 0; height: 30px; line-height: 29px; background: #181818; border-radius: 5px; font-size: 18px; font-weight: 500; }
.form { display: grid; grid-template-columns: 567px 567px; column-gap: 30px; margin-top: 177px; }
.field { height: 115px; }
.field label { display: block; height: 24px; line-height: 22px; font-size: 15.500px; font-weight: 700; margin-bottom: 11px; }
.input { height: 50px; box-sizing: border-box; border: 1px solid #d2d6db; border-bottom: 3px solid #fff; border-radius: 7px; padding: 0 20px; line-height: 45px; font-size: 18px; color: #cfcfcf; }
.phone { padding: 1px 0 0 0; display: flex; gap: 7px; }
.dial { width: 117px; height: 44px; background: #f2f2f2; display: flex; align-items: center; box-sizing: border-box; padding-left: 23px; }
.code { margin-left: 7px; color: #fff; font-size: 19px; }
.phone .ph { line-height: 43px; font-size: 19px; }
.area { height: 75px; box-sizing: border-box; border: 1px solid #d2d6db; border-radius: 5px; padding: 5px 20px; position: relative; color: #bfbfbf; font-size: 16px; line-height: 29px; }
.grip { position: absolute; left: 2px; bottom: 2px; }
.field.files label { margin: 5px 0 9px; line-height: 25px; font-size: 16px; }
.field:nth-child(7) label { margin-bottom: 16px; }
.hint { height: 20px; line-height: 20px; font-size: 13px; font-weight: 500; margin-bottom: 10px; }
.upload { width: 112px; height: 45px; box-sizing: border-box; border: 1px solid #d2d6db; border-radius: 4px; text-align: right; padding-right: 15px; line-height: 42px; font-size: 16px; font-weight: 700; }
.submit { width: 84px; height: 50px; margin-top: 60px; border-radius: 5px; background: #1b8354; box-sizing: border-box; padding-right: 18px; line-height: 44px; font-size: 17px; font-weight: 700; }

.card { width: 520px; height: 900px; flex: none; box-sizing: border-box; border: 1px solid #d2d6db; border-radius: 20px 20px 0 0; background: #fff; padding: 50px 50px 0; color: #1f2a37; }
h2 { margin: 0; height: 36px; line-height: 32px; font-size: 22px; font-weight: 700; }
.list { margin-top: 29px; display: flex; flex-direction: column; gap: 20px; }
.contact { height: 65px; background: #181818; display: flex; color: #1b8354; position: relative; }
.ci { margin: 2px -1px 0 0; position: relative; left: 1px; }
.info { margin-right: 13px; flex: 1; }
.cl { height: 35px; line-height: 30px; font-size: 18.500px; font-weight: 600; color: #1f2a37; }
.cv { height: 30px; line-height: 30px; font-size: 20px; color: #fdc596; display: flex; gap: 9px; }
.cv.plain { color: #fff; }
.copy { color: #1b8354; fill: none; stroke: currentColor; stroke-width: 1.500; }
.cv .copy { margin-top: 3px; }
.place { height: 95px; }
.addr { line-height: 30px; font-size: 18px; font-weight: 500; color: #fdc596; position: relative; top: -1px; }
.link { position: absolute; left: 0; bottom: 20px; }
.follow { margin-top: 19px; }
.social { display: flex; gap: 13px; margin-top: 13px; }
.social i { width: 27px; height: 30px; background: #181818; }
hr { border: 0; height: 1px; background: #d2d6db; margin: 30px 0 0; }
.emerg { margin-top: 29px; }
.erow { display: flex; align-items: center; height: 30px; line-height: 30px; margin-top: 20px; color: #181818; font-size: 18px; font-weight: 500; }
.emerg + .erow { margin-top: 30px; }
.en { line-height: 28px; }
.num { background: #181818; color: #fdc596; height: 30px; margin: 0 10px; font-size: 20px; font-weight: 400; }
.num span { text-decoration: underline; text-decoration-thickness: 2px; text-underline-offset: 3px; }
.erow .copy { margin-right: -1px; }
.a11y { position: absolute; left: 56px; top: 820px; width: 80px; height: 80px; border-radius: 50%; background: #1b8354; display: flex; align-items: center; justify-content: center; }
.a11y span { width: 30px; height: 30px; background: #181818; display: flex; justify-content: center; }

.taskbar { height: 60px; flex: none; box-sizing: border-box; border-top: 1px solid #bdbdbd; background: #eee; display: flex; position: relative; font-family: "Open Sans", "Noto Sans", "DejaVu Sans", sans-serif; }
.widget { width: 28px; margin: 14px 0 0 25px; position: relative; }
.badge { position: absolute; width: 20px; height: 20px; border-radius: 50%; background: #c42b1c; color: #fff; font-size: 13px; font-weight: 400; line-height: 20px; text-align: center; }
.widget .badge { left: 14px; top: -8px; }
.news { width: 119px; margin-left: 12px; padding-top: 8px; }
.n1, .n2 { height: 21px; line-height: 20px; font-size: 13px; color: #1b1b1b; }
.n1 { padding-right: 56px; }
.n2 { color: #666; }
.win { margin: 15px 0 0 263px; }
.search { width: 275px; height: 40px; box-sizing: border-box; margin: 9px 0 0 17px; border-radius: 20px; border: 1px solid #dcdcdc; border-bottom-color: #c4c4c4; background: #fbfbfb; display: flex; align-items: center; }
.search > svg { margin-left: 14px; }
.stext { margin-left: 13px; font-size: 16px; color: #5f5f5f; }
.case { width: 66px; height: 34px; border-radius: 17px; background: #e8e8e8; margin-left: auto; margin-right: 2px; display: flex; align-items: center; justify-content: center; }
.apps { display: flex; margin-left: 5px; gap: 5.050px; }
.app { width: 50px; height: 50px; margin-top: 4px; border-radius: 5px; display: flex; align-items: center; justify-content: center; position: relative; }
.app.on { background: #e9aeaa; }
.app .badge { right: 4px; top: 4px; }
.run { position: absolute; left: 21px; bottom: 1px; width: 8px; height: 4px; border-radius: 2px; background: #868686; }
.on .run { background: #c42b1c; }
.tray { margin-left: auto; display: flex; padding-right: 25px; }
.chev { margin-top: 25px; }
.cloud { margin: 22px 0 0 23px; }
.lang { margin: 16px 0 0 30px; width: 12px; font-size: 17px; line-height: 26px; color: #1b1b1b; }
.wifi { margin: 21px 0 0 32px; }
.vol { margin: 21px 0 0 10px; }
.bat { margin: 19px 0 0 11px; }
.clock { margin: 9px 0 0 21px; width: 68px; text-align: right; font-size: 14px; line-height: 20px; color: #1b1b1b; }
</style>
